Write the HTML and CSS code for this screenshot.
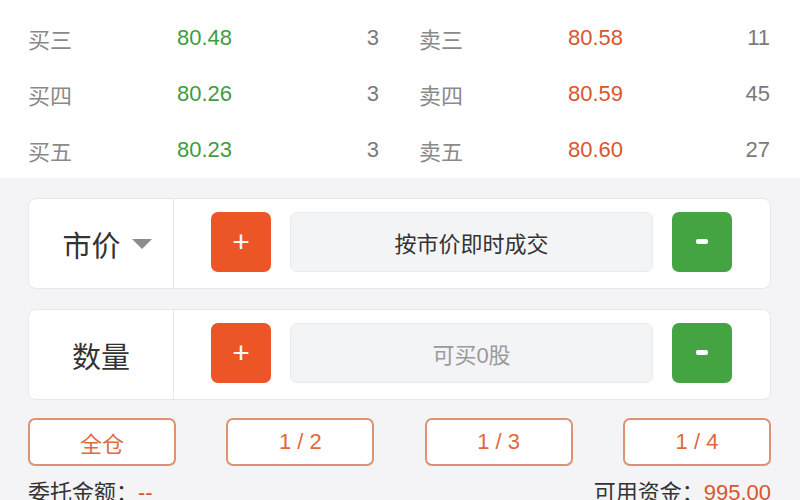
FILE: index.html
```html
<!DOCTYPE html>
<html lang="zh-CN">
<head>
    <meta charset="UTF-8">
    <meta name="viewport" content="width=device-width, initial-scale=1.0">
    <title>交易</title>
    <link rel="stylesheet" href="styles.css">
</head>
<body>
    <div class="book">
        <div class="side">
            <div class="row"><span class="label">买三</span><span class="price buy">80.48</span><span class="vol">3</span></div>
            <div class="row"><span class="label">买四</span><span class="price buy">80.26</span><span class="vol">3</span></div>
            <div class="row"><span class="label">买五</span><span class="price buy">80.23</span><span class="vol">3</span></div>
        </div>
        <div class="side">
            <div class="row"><span class="label">卖三</span><span class="price sell">80.58</span><span class="vol">11</span></div>
            <div class="row"><span class="label">卖四</span><span class="price sell">80.59</span><span class="vol">45</span></div>
            <div class="row"><span class="label">卖五</span><span class="price sell">80.60</span><span class="vol">27</span></div>
        </div>
    </div>

    <div class="panel">
        <div class="card">
            <div class="card-label select">市价<span class="caret"></span></div>
            <div class="card-body">
                <button class="step plus">+</button>
                <div class="field">按市价即时成交</div>
                <button class="step minus"><span class="bar"></span></button>
            </div>
        </div>
        <div class="card">
            <div class="card-label">数量</div>
            <div class="card-body">
                <button class="step plus">+</button>
                <div class="field placeholder">可买0股</div>
                <button class="step minus"><span class="bar"></span></button>
            </div>
        </div>
        <div class="ratios">
            <button class="ratio">全仓</button>
            <button class="ratio">1 / 2</button>
            <button class="ratio">1 / 3</button>
            <button class="ratio">1 / 4</button>
        </div>
        <div class="summary">
            <span>委托金额：<em>--</em></span>
            <span>可用资金：<em>995.00</em></span>
        </div>
    </div>
</body>
</html>
```

FILE: styles.css
```css
body {
    margin: 0;
    font-family: "Liberation Sans", "Noto Sans CJK SC", sans-serif;
    background-color: #f4f4f6;
    color: #333;
}

.book {
    background-color: #fff;
    height: 178px;
    padding: 10px 30px 0 28px;
    box-sizing: border-box;
    display: grid;
    grid-template-columns: 1fr 1fr;
    gap: 40px;
}

.row {
    display: grid;
    grid-template-columns: 149px 1fr auto;
    align-items: center;
    height: 56px;
    font-size: 22px;
}

.label {
    color: #8a8a8a;
}

.vol {
    color: #7a7a7a;
}

.buy {
    color: #3f9c3f;
}

.sell {
    color: #d8572b;
}

.panel {
    padding: 20px 29px 0 28px;
}

.card {
    display: flex;
    height: 91px;
    background-color: #fff;
    border: 1px solid #e7e7e9;
    border-radius: 8px;
    box-sizing: border-box;
    margin-bottom: 20px;
}

.card-label {
    width: 144px;
    border-right: 1px solid #e7e7e9;
    display: flex;
    justify-content: center;
    align-items: center;
    font-size: 29px;
    color: #333;
}

.select {
    width: 132px;
    padding-left: 12px;
}

.caret {
    width: 0;
    height: 0;
    margin-left: 11px;
    border-left: 10px solid transparent;
    border-right: 10px solid transparent;
    border-top: 10px solid #8c8c8c;
}

.card-body {
    flex: 1;
    display: flex;
    align-items: center;
    gap: 19px;
    padding: 0 38px 4px 37px;
}

.step {
    width: 60px;
    height: 60px;
    border: none;
    border-radius: 7px;
    color: #fff;
    display: flex;
    justify-content: center;
    align-items: center;
    padding: 0;
    font-family: "Liberation Sans", sans-serif;
}

.plus {
    background-color: #ec5526;
    font-size: 30px;
    font-weight: 300;
}

.minus {
    background-color: #45a442;
}

.bar {
    width: 12px;
    height: 5px;
    border-radius: 2px;
    background-color: #fff;
}

.field {
    flex: 1;
    height: 60px;
    box-sizing: border-box;
    background-color: #f3f4f5;
    border: 1px solid #eaeaec;
    border-radius: 7px;
    display: flex;
    justify-content: center;
    align-items: center;
    font-size: 22px;
    color: #333;
}

.placeholder {
    color: #9a9a9a;
}

.ratios {
    display: flex;
    justify-content: space-between;
    margin-top: -2px;
}

.ratio {
    width: 148px;
    height: 48px;
    background-color: #fff;
    border: 2px solid #dd9272;
    border-radius: 7px;
    color: #e06a3b;
    font-size: 22px;
    font-family: "Liberation Sans", "Noto Sans CJK SC", sans-serif;
}

.summary {
    display: flex;
    justify-content: space-between;
    margin-top: 8px;
    font-size: 22px;
    color: #333;
}

.summary em {
    font-style: normal;
    color: #d8572b;
}
```
